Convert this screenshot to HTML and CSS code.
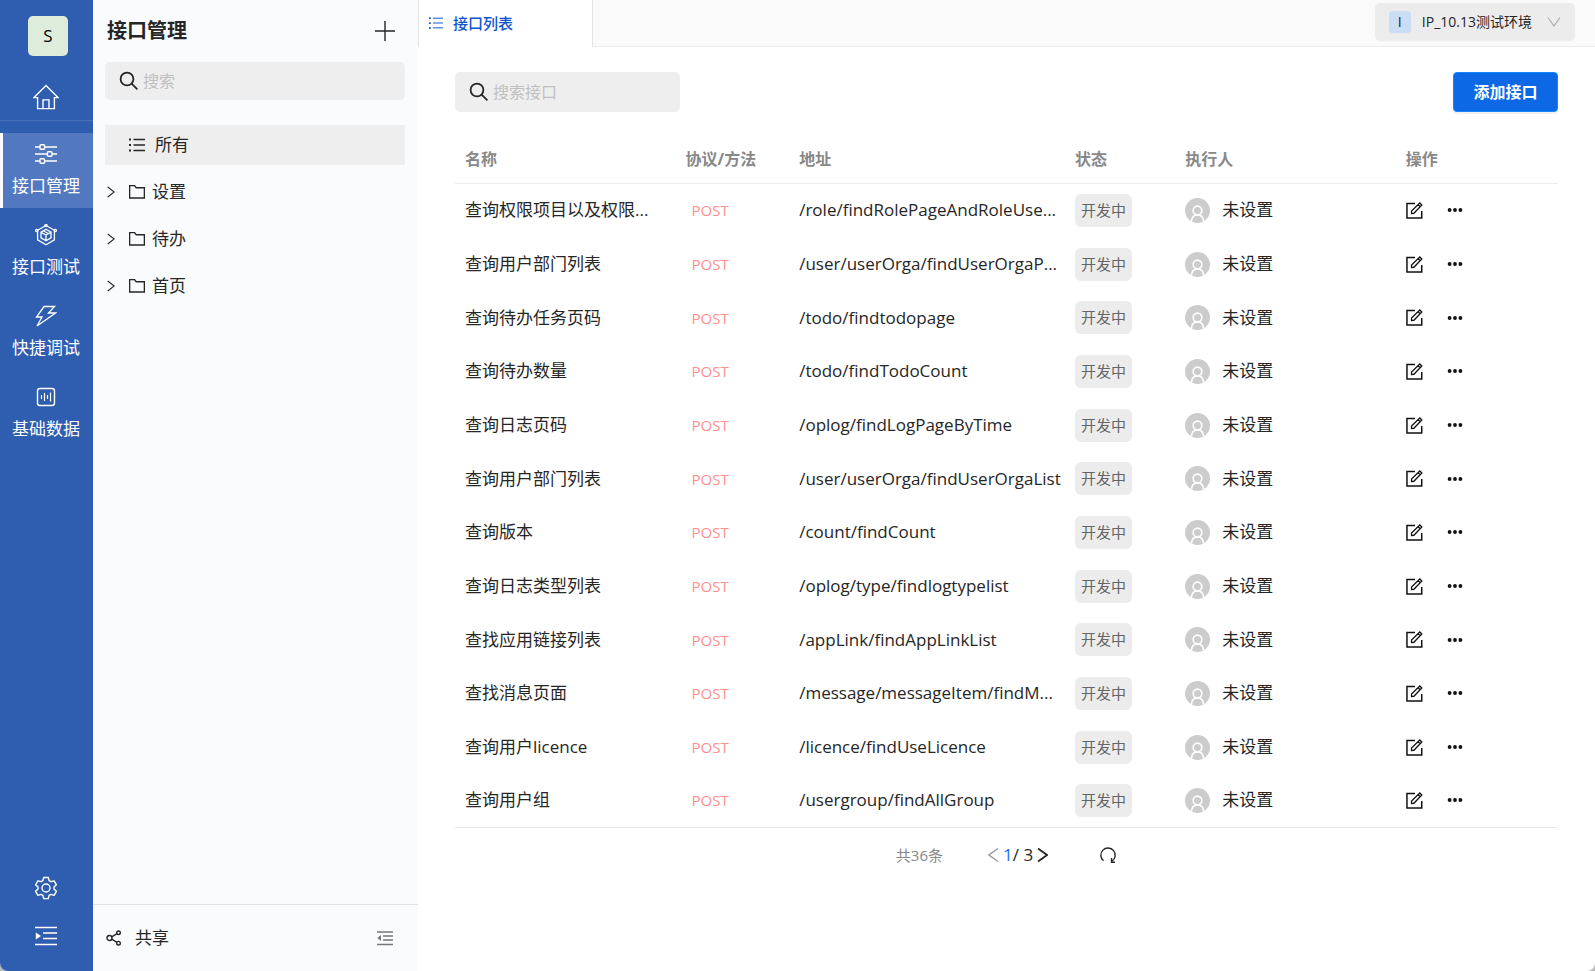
FILE: index.html
```html
<!DOCTYPE html>
<html lang="zh-CN">
<head>
    <meta charset="UTF-8">
    <meta name="viewport" content="width=device-width, initial-scale=1.0">
    <title>接口管理</title>
    <link rel="stylesheet" href="styles.css">
</head>
<body>
    <!-- Icons -->
    <svg class="icon-defs" aria-hidden="true">
        <symbol id="i-search" viewBox="0 0 20 20"><circle cx="8" cy="8" r="6.4"/><path d="M12.6 12.6L18.4 18.4"/></symbol>
        <symbol id="i-list" viewBox="0 0 16 16"><path d="M4.5 2.5H16M4.5 8H16M4.5 13.5H16"/><path d="M0 2.5h2M0 8h2M0 13.5h2" stroke-width="2"/></symbol>
        <symbol id="i-folder" viewBox="0 0 16 16"><path d="M.6 14V1.6h5l1.6 2.2h8.2V14z"/></symbol>
        <symbol id="i-arrow" viewBox="0 0 8 12"><path d="M.7 1L7.2 6L.7 11"/></symbol>
        <symbol id="i-edit" viewBox="0 0 16 16"><path d="M8.5 1.5H.9v13.6h13.9V8.5"/><path d="M5.2 10.8V8.4L13 .9l1.9 1.9-7.5 7.8zM11.4 2.5l1.9 1.9" stroke-width="1.2"/></symbol>
        <symbol id="i-more" viewBox="0 0 16 16"><g fill="currentColor" stroke="none"><circle cx="2.6" cy="8" r="1.9"/><circle cx="8" cy="8" r="1.9"/><circle cx="13.4" cy="8" r="1.9"/></g></symbol>
        <symbol id="i-user" viewBox="0 0 26 26"><circle cx="13" cy="13" r="13" fill="#ccc" stroke="none"/><g stroke="#fff" stroke-width="1.7"><circle cx="13" cy="13" r="4.5"/><path d="M6.8 24.3c0-4 2.4-6.8 6.2-6.8s6.2 2.8 6.2 6.8"/></g></symbol>
    </svg>

    <div class="app">
        <!-- Main navigation -->
        <nav class="nav">
            <div class="logo">S</div>
            <a class="home" href="#" aria-label="首页">
                <svg class="icon" width="26" height="26" viewBox="0 0 26 26"><path d="M1 13.6L13 1.4l12 12.2h-3.6v11H4.6v-11z"/><path d="M10 24.5v-8.6h6v8.6"/></svg>
            </a>
            <a class="nav-item active" href="#">
                <svg class="icon" width="22" height="22" viewBox="0 0 22 22"><path d="M0 4h5M10 4h12M0 11h12M17 11h5M0 18h5M10 18h12"/><rect x="5" y="1.7" width="4.6" height="4.6" rx="1"/><rect x="12.4" y="8.7" width="4.6" height="4.6" rx="1"/><rect x="5" y="15.7" width="4.6" height="4.6" rx="1"/></svg>
                <span>接口管理</span>
            </a>
            <a class="nav-item" href="#">
                <svg class="icon thin" width="22" height="22" viewBox="0 0 22 22"><path d="M11 1.5l8.400 4.800v9.600L11 20.700l-8.400-4.800V6.300z"/><path d="M11 5.300l5 2.900v5.700l-5 2.900-5-2.900V8.200zM6 8.200l5 2.900 5-2.900M11 11.100v5.700M8.500 6.800l5 2.900"/><g fill="#2f5db0"><circle cx="11" cy="1.600" r="1.100"/><circle cx="1.700" cy="6.500" r="1.100"/><circle cx="20.300" cy="6.500" r="1.100"/></g></svg>
                <span>接口测试</span>
            </a>
            <a class="nav-item" href="#">
                <svg class="icon thin" width="22" height="22" viewBox="0 0 22 22"><path d="M9 1.500h10.500l-6 6.500h7L2 21l5-9H1.500z"/></svg>
                <span>快捷调试</span>
            </a>
            <a class="nav-item" href="#">
                <svg class="icon" width="22" height="22" viewBox="0 0 22 22"><rect x="2.500" y="2.500" width="17" height="17" rx="2.500"/><path d="M6.500 9v4M9.500 7v8M12.500 9v4M15.500 6.500v9" stroke-width="1.200"/></svg>
                <span>基础数据</span>
            </a>
            <div class="nav-bottom">
                <button type="button" aria-label="系统设置">
                    <svg class="icon" width="24" height="24" viewBox="0 0 24 24"><path d="M9.700 1.500h4.600l.8 3.200 1.800 1 3.200-.9 2.300 4-2.400 2.300v1.900l2.400 2.300-2.300 4-3.200-.9-1.800 1-.8 3.200H9.700l-.8-3.200-1.800-1-3.200.9-2.300-4L4 13V11.100L1.600 8.800l2.300-4 3.200.9 1.800-1z" stroke-linejoin="round"/><circle cx="12" cy="12" r="4"/></svg>
                </button>
                <button type="button" aria-label="展开导航">
                    <svg class="icon" width="22" height="20" viewBox="0 0 22 20"><path d="M0 1.500h22M8 7h14M8 12.500h14M0 18.500h22"/><path d="M.8 6.500v7L6 10z" fill="currentColor" stroke="none"/></svg>
                </button>
            </div>
        </nav>

        <!-- Category sidebar -->
        <aside class="sidebar">
            <div class="sidebar-head">
                <h1>接口管理</h1>
                <button type="button" aria-label="添加">
                    <svg class="icon" width="20" height="20" viewBox="0 0 20 20"><path d="M10 0v20M0 10h20"/></svg>
                </button>
            </div>
            <label class="search">
                <svg class="icon bold" width="20" height="20"><use href="#i-search"/></svg>
                <input type="text" placeholder="搜索" aria-label="搜索">
            </label>
            <ul class="tree">
                <li><a class="all" href="#"><svg class="icon" width="16" height="16"><use href="#i-list"/></svg>所有</a></li>
                <li><a href="#"><svg class="icon thin" width="8" height="12"><use href="#i-arrow"/></svg><svg class="icon" width="16" height="16"><use href="#i-folder"/></svg>设置</a></li>
                <li><a href="#"><svg class="icon thin" width="8" height="12"><use href="#i-arrow"/></svg><svg class="icon" width="16" height="16"><use href="#i-folder"/></svg>待办</a></li>
                <li><a href="#"><svg class="icon thin" width="8" height="12"><use href="#i-arrow"/></svg><svg class="icon" width="16" height="16"><use href="#i-folder"/></svg>首页</a></li>
            </ul>
            <div class="sidebar-foot">
                <a href="#">
                    <svg class="icon" width="16" height="16" viewBox="0 0 16 16"><circle cx="3.500" cy="8" r="2.500"/><circle cx="12.500" cy="2.800" r="1.800"/><circle cx="12.500" cy="13.200" r="1.800"/><path d="M5.700 6.800L11 3.700M5.700 9.200l5.300 3.100"/></svg>
                    共享
                </a>
                <button type="button" aria-label="收起">
                    <svg class="icon" width="16" height="16" viewBox="0 0 16 16"><path d="M0 2h16M6 6h10M6 10h10M0 14.500h16"/><path d="M4 5v6L.3 8z" fill="currentColor" stroke="none"/></svg>
                </button>
            </div>
        </aside>

        <!-- Content -->
        <main class="main">
            <header class="tabs">
                <a class="tab" href="#"><svg class="icon thin" width="14" height="14"><use href="#i-list"/></svg>接口列表</a>
                <button class="env" type="button">
                    <span class="env-badge">I</span>
                    <span>IP_10.13测试环境</span>
                    <svg class="icon thin" width="14" height="10" viewBox="0 0 14 10"><path d="M1 .5l6 8.500 6-8.500"/></svg>
                </button>
            </header>

            <div class="content">
                <div class="toolbar">
                    <label class="search">
                        <svg class="icon bold" width="20" height="20"><use href="#i-search"/></svg>
                        <input type="text" placeholder="搜索接口" aria-label="搜索接口">
                    </label>
                    <button class="add" type="button">添加接口</button>
                </div>

                <table>
                    <thead>
                        <tr>
                            <th class="c-name">名称</th>
                            <th class="c-method">协议/方法</th>
                            <th class="c-path">地址</th>
                            <th class="c-status">状态</th>
                            <th class="c-user">执行人</th>
                            <th class="c-action">操作</th>
                        </tr>
                    </thead>
                    <tbody id="apiList"></tbody>
                </table>

                <div class="pager">
                    <span class="total">共36条</span>
                    <div class="pages">
                        <button class="prev" type="button" aria-label="上一页"><svg class="icon" width="11" height="16" viewBox="0 0 11 16"><path d="M10 1.500L1 8l9 6.500"/></svg></button>
                        <span><b>1</b>/ 3</span>
                        <button type="button" aria-label="下一页"><svg class="icon bold" width="11" height="16" viewBox="0 0 11 16"><path d="M1 1.500L10 8l-9 6.500"/></svg></button>
                    </div>
                    <button type="button" aria-label="刷新"><svg class="icon" width="18" height="18" viewBox="0 0 18 18"><path d="M4.500 14.800A7.200 7.200 0 1 1 13 15.200"/><path d="M12.500 12v4.300h3.500"/></svg></button>
                </div>
            </div>
        </main>
    </div>

    <script src="script.js"></script>
</body>
</html>
```
FILE: styles.css
```css
* {
    box-sizing: border-box;
}
html {
    background: #b9b9b9;
}
body {
    margin: 0;
    font-family: "Open Sans", "Noto Sans CJK SC", sans-serif;
    font-size: 17px;
    line-height: 24px;
    color: #262626;
}
a {
    color: inherit;
    text-decoration: none;
}
button {
    display: flex;
    align-items: center;
    padding: 0;
    border: 0;
    background: none;
    font: inherit;
    color: inherit;
    cursor: pointer;
}
.icon-defs {
    position: absolute;
    width: 0;
    height: 0;
}
.icon {
    flex: none;
    fill: none;
    stroke: currentColor;
    stroke-width: 1.4;
}
.icon.thin {
    stroke-width: 1.1;
}
.icon.bold {
    stroke-width: 1.8;
}
.app {
    display: flex;
    min-height: 100vh;
    border-radius: 0 0 8px 8px;
    background: #fff;
    overflow: hidden;
}

/* main navigation */
.nav {
    display: flex;
    flex-direction: column;
    align-items: center;
    flex: none;
    width: 93px;
    padding-top: 16px;
    background: #2f5db0;
    color: #fff;
}
.nav .icon.thin {
    stroke-width: 1.3;
}
.logo {
    width: 40px;
    height: 40px;
    margin-left: 3px;
    border-radius: 5px;
    background: #deeddb;
    color: #000;
    line-height: 40px;
    text-align: center;
}
.home {
    display: flex;
    justify-content: center;
    align-items: center;
    width: 100%;
    height: 65px;
    margin-bottom: 12px;
    padding-top: 18px;
    padding-right: 1px;
    border-bottom: 1px solid #4870b9;
}
.nav-item {
    display: flex;
    flex-direction: column;
    align-items: center;
    gap: 9px;
    width: 100%;
    height: 75px;
    margin-bottom: 6px;
    padding-top: 10px;
    padding-right: 1px;
    white-space: nowrap;
}
.nav-item.active {
    border-left: 3px solid #fff;
    padding-right: 4px;
    background: #5279bf;
}
.nav-bottom {
    display: flex;
    flex-direction: column;
    align-items: center;
    gap: 26px;
    margin-top: auto;
    padding-right: 1px;
    padding-bottom: 25px;
}

/* category sidebar */
.sidebar {
    display: flex;
    flex-direction: column;
    flex: none;
    width: 325px;
    background: #fafbfd;
}
.sidebar-head {
    display: flex;
    justify-content: space-between;
    align-items: center;
    height: 62px;
    padding: 0 23px 0 14px;
}
.sidebar-head h1 {
    margin: 0;
    font-size: 20px;
}
.search {
    display: flex;
    align-items: center;
    gap: 4px;
    height: 38px;
    padding: 0 14px;
    border-radius: 5px;
    background: #eee;
}
.search input {
    flex: 1;
    min-width: 0;
    padding: 0;
    border: 0;
    outline: 0;
    background: none;
    font: inherit;
    font-size: 16px;
}
.search input::placeholder {
    color: #bfbfbf;
}
.sidebar .search {
    margin: 0 13px 0 12px;
}
.tree {
    flex: 1;
    margin: 25px 13px 0 12px;
    padding: 0;
    list-style: none;
}
.tree a {
    display: flex;
    align-items: center;
    height: 47px;
    padding-left: 2px;
    gap: 7px;
}
.tree .icon.thin {
    margin-right: 7px;
}
.tree .all {
    height: 40px;
    margin-bottom: 3px;
    padding-left: 24px;
    gap: 10px;
    background: #eee;
}
.sidebar-foot {
    display: flex;
    justify-content: space-between;
    align-items: center;
    height: 67px;
    padding: 0 25px 0 13px;
    border-top: 1px solid #e1e3e6;
}
.sidebar-foot a {
    display: flex;
    align-items: center;
    gap: 13px;
}
.sidebar-foot button {
    color: #777;
}

/* content */
.main {
    flex: 1;
    min-width: 0;
}
.tabs {
    display: flex;
    justify-content: space-between;
    height: 47px;
    padding-right: 20px;
    border-bottom: 1px solid #ececec;
    background: #fafafa;
}
.tab {
    display: flex;
    align-items: center;
    gap: 10px;
    width: 175px;
    height: 47px;
    padding: 0 0 2px 10px;
    border: solid #e5e5e5;
    border-width: 0 1px;
    background: #fff;
    color: #0d55cf;
    font-size: 15px;
    font-weight: 500;
}
.env {
    gap: 11px;
    height: 38px;
    margin-top: 3px;
    padding: 0 14px;
    border-radius: 5px;
    background: #ececec;
    font-size: 14px;
}
.env-badge {
    width: 22px;
    height: 22px;
    border-radius: 4px;
    background: #cbdcf5;
    line-height: 22px;
}
.env .icon {
    margin-left: 4px;
    color: #aaa;
}
.content {
    padding: 25px 37px;
}
.toolbar {
    display: flex;
    justify-content: space-between;
}
.toolbar .search {
    width: 225px;
    height: 40px;
}
.add {
    justify-content: center;
    width: 105px;
    height: 40px;
    border: 1px solid #1684fc;
    border-radius: 4px;
    background: #0d68e6;
    box-shadow: 0 2px 0 #f0f0f0;
    color: #fff;
    font-size: 16px;
    font-weight: bold;
}
table {
    width: 100%;
    margin-top: 24px;
    table-layout: fixed;
    border-collapse: collapse;
    border-bottom: 1px solid #e8e8e8;
}
th {
    height: 47px;
    padding: 0 10px;
    border-bottom: 1px solid #ececec;
    color: #888;
    font-size: 16px;
    text-align: left;
}
.c-name {
    width: 20%;
}
.c-method {
    width: 10.3%;
}
.c-path {
    width: 25%;
}
.c-status {
    width: 10%;
}
.c-user {
    width: 20%;
}
td {
    height: 54px;
    padding: 0 10px;
    white-space: nowrap;
}
tr:nth-child(3n) td {
    height: 53px;
}
td.path {
    padding-right: 0;
}
.method {
    padding: 0 6px;
    color: #ff8f8f;
    font-size: 15px;
}
.status {
    display: inline-block;
    padding: 4px 6px 5px;
    border-radius: 6px;
    background: #ececec;
    color: #666;
    font-size: 15px;
    vertical-align: middle;
}
.user,
.actions {
    display: flex;
    align-items: center;
    gap: 12px;
}
.actions {
    gap: 24px;
    color: #111;
}
.pager {
    display: flex;
    justify-content: center;
    align-items: center;
    gap: 45px;
    height: 54px;
}
.total {
    color: #888;
    font-size: 15px;
}
.pages {
    display: flex;
    align-items: center;
    gap: 4px;
}
.pages b {
    color: #1a6cf0;
    font-weight: normal;
}
.prev {
    color: #999;
}
.pages + button {
    margin-left: 6px;
}
```
FILE: script.js
```js
const apis = [
    ['查询权限项目以及权限...', '/role/findRolePageAndRoleUse...'],
    ['查询用户部门列表', '/user/userOrga/findUserOrgaP...'],
    ['查询待办任务页码', '/todo/findtodopage'],
    ['查询待办数量', '/todo/findTodoCount'],
    ['查询日志页码', '/oplog/findLogPageByTime'],
    ['查询用户部门列表', '/user/userOrga/findUserOrgaList'],
    ['查询版本', '/count/findCount'],
    ['查询日志类型列表', '/oplog/type/findlogtypelist'],
    ['查找应用链接列表', '/appLink/findAppLinkList'],
    ['查找消息页面', '/message/messageItem/findM...'],
    ['查询用户licence', '/licence/findUseLicence'],
    ['查询用户组', '/usergroup/findAllGroup']
];

document.getElementById('apiList').innerHTML = apis.map(([name, path]) => `
    <tr>
        <td>${name}</td>
        <td><span class="method">POST</span></td>
        <td class="path">${path}</td>
        <td><span class="status">开发中</span></td>
        <td><div class="user"><svg class="icon" width="25" height="25"><use href="#i-user"/></svg>未设置</div></td>
        <td><div class="actions">
            <button type="button" aria-label="编辑"><svg class="icon" width="17" height="17"><use href="#i-edit"/></svg></button>
            <button type="button" aria-label="更多"><svg class="icon" width="16" height="16"><use href="#i-more"/></svg></button>
        </div></td>
    </tr>`).join('');
```
